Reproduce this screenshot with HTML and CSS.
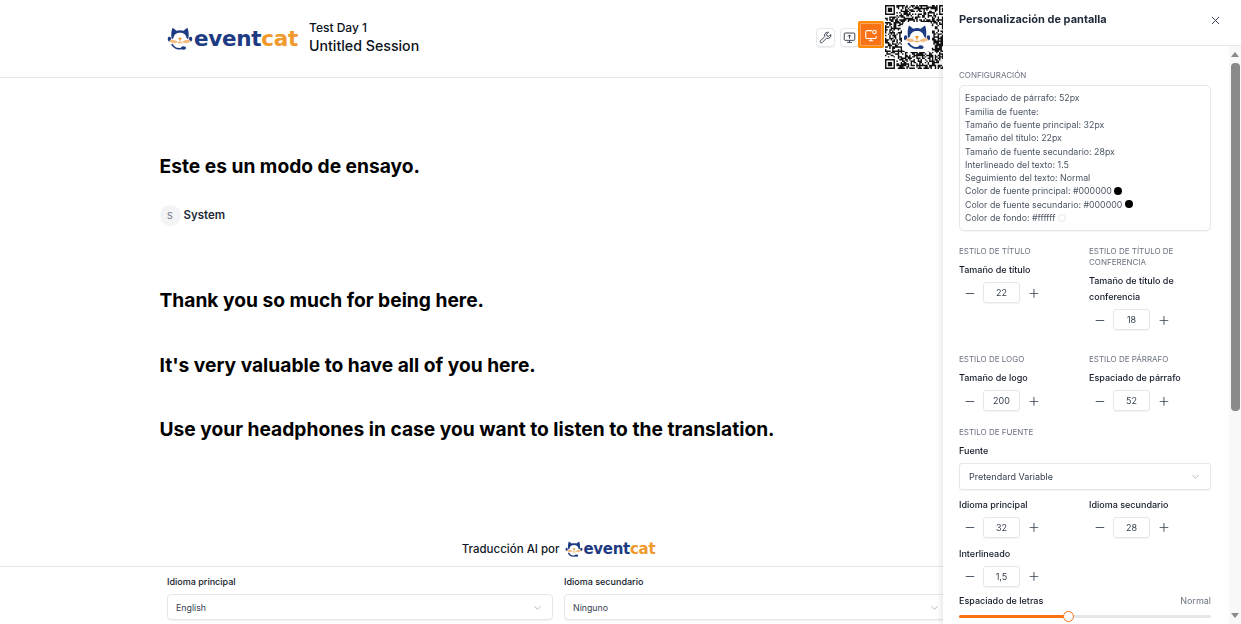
FILE: index.html
```html
<!DOCTYPE html>
<html lang="es">
<head>
<meta charset="utf-8">
<title>Personalización de pantalla</title>
<link rel="stylesheet" href="styles.css">
</head>
<body>
<svg class="defs" width="0" height="0" aria-hidden="true">
  <symbol id="cat" viewBox="0 0 30 28">
    <path d="M5.500 15 C4.500 10 5 4 6.500 1.500 L11 5 C13.500 4.200 16.500 4.200 19 5 L23.500 1.500 C25 4 25.500 10 24.500 15 L22.500 13.500 C22 9.500 19 7.500 15 7.500 C11 7.500 8 9.500 7.500 13.500 Z" fill="#1d3a82"/>
    <rect x="1" y="12" width="3.500" height="5.500" rx="1.700" fill="#1d3a82"/>
    <rect x="25.500" y="12" width="3.500" height="5.500" rx="1.700" fill="#1d3a82"/>
    <path d="M2.500 16.500 C5 14.500 9 15.500 12.500 17.500 C11.500 20 6 20.500 2.500 16.500 Z" fill="#f6bd83"/>
    <path d="M27.500 16.500 C25 14.500 21 15.500 17.500 17.500 C18.500 20 24 20.500 27.500 16.500 Z" fill="#f6bd83"/>
    <path d="M13.500 13.500 L16.500 13.500 L15 15.500 Z M15 15 V18 M12.500 19 L17.500 19" stroke="#ee8f22" stroke-width="1" fill="#ee8f22"/>
    <path d="M5.500 20.500 C8 25 13 26.500 17 25.500" stroke="#1d3a82" stroke-width="2" fill="none"/>
    <ellipse cx="19" cy="25" rx="3" ry="2" fill="#1d3a82"/>
  </symbol>
  <symbol id="chev" viewBox="0 0 10 10">
    <path d="M1.500 3.500 L5 7 L8.500 3.500" fill="none" stroke="#b0b5bd" stroke-width="1"/>
  </symbol>
</svg>

<div class="stage">
  <header class="top">
    <div class="brand">
      <svg class="cat-lg"><use href="#cat"/></svg>
      <span class="word word-lg">event<b>cat</b></span>
    </div>
    <div class="session">
      <div class="day">Test Day 1</div>
      <div class="name">Untitled Session</div>
    </div>
    <div class="tools">
      <span class="tool">
        <svg viewBox="0 0 16 16" width="13" height="13"><path d="M10.500 1.500a3.700 3.700 0 0 0-3.300 5.200L1.800 12.100a1.400 1.400 0 0 0 2.100 2.100l5.400-5.400a3.700 3.700 0 0 0 5.100-4.500l-2.400 2.400-2.100-.6-.6-2.100 2.400-2.400a3.700 3.700 0 0 0-1.200-.1z" fill="none" stroke="#374151" stroke-width="1.200" stroke-linejoin="round"/></svg>
      </span>
      <span class="tool">
        <svg viewBox="0 0 16 16" width="13" height="13"><rect x="1.500" y="2.500" width="13" height="9" rx="1.200" fill="none" stroke="#374151" stroke-width="1.200"/><path d="M5 14h6M8 11.500V14M8 9.500V5M6 6.800 8 4.800l2 2" fill="none" stroke="#374151" stroke-width="1.200"/></svg>
      </span>
      <span class="tool-on">
        <svg viewBox="0 0 16 16" width="14" height="14"><path d="M9 3H3.500A1.500 1.500 0 0 0 2 4.500v6A1.500 1.500 0 0 0 3.500 12h9a1.500 1.500 0 0 0 1.500-1.500V9M5.500 14.500h5M8 12v2.500" fill="none" stroke="#fff" stroke-width="1.200"/><circle cx="12" cy="4.500" r="2" fill="none" stroke="#fff" stroke-width="1.200"/></svg>
      </span>
      <div class="qr">
        <svg id="qr" class="qr-code" viewBox="0 0 45 45"></svg>
        <span class="qr-logo"><svg class="cat-qr"><use href="#cat"/></svg></span>
      </div>
    </div>
  </header>

  <main class="speech">
    <h2 class="line">Este es un modo de ensayo.</h2>
    <div class="speaker"><span class="avatar">S</span><span class="who">System</span></div>
    <p class="line first">Thank you so much for being here.</p>
    <p class="line">It's very valuable to have all of you here.</p>
    <p class="line">Use your headphones in case you want to listen to the translation.</p>
  </main>

  <div class="credit">
    <span>Traducción AI por</span>
    <svg class="cat-sm"><use href="#cat"/></svg>
    <span class="word word-sm">event<b>cat</b></span>
  </div>

  <footer class="langs">
    <div class="lang">
      <div class="lang-label">Idioma principal</div>
      <div class="lang-select"><span>English</span><svg class="chev"><use href="#chev"/></svg></div>
    </div>
    <div class="lang">
      <div class="lang-label">Idioma secundario</div>
      <div class="lang-select"><span>Ninguno</span><svg class="chev"><use href="#chev"/></svg></div>
    </div>
  </footer>
</div>

<aside class="panel">
  <div class="panel-head">
    <h1>Personalización de pantalla</h1>
    <svg viewBox="0 0 10 10" width="9" height="9"><path d="M1 1l8 8M9 1L1 9" stroke="#374151" stroke-width="1.100"/></svg>
  </div>
  <div class="panel-view">
    <div class="panel-body">
      <div class="sec">Configuración</div>
      <div class="summary">
        <div>Espaciado de párrafo: 52px</div>
        <div>Familia de fuente:</div>
        <div>Tamaño de fuente principal: 32px</div>
        <div>Tamaño del título: 22px</div>
        <div>Tamaño de fuente secundario: 28px</div>
        <div>Interlineado del texto: 1.5</div>
        <div>Seguimiento del texto: Normal</div>
        <div>Color de fuente principal: #000000 <i class="dot"></i></div>
        <div>Color de fuente secundario: #000000 <i class="dot"></i></div>
        <div>Color de fondo: #ffffff <i class="dot dot-w"></i></div>
      </div>

      <div class="cols row-a">
        <div>
          <div class="sec">Estilo de título</div>
          <div class="fld sec-gap">Tamaño de título</div>
          <div class="step"><span class="op">−</span><span class="num">22</span><span class="op">+</span></div>
        </div>
        <div>
          <div class="sec">Estilo de título de conferencia</div>
          <div class="fld sec-gap">Tamaño de título de conferencia</div>
          <div class="step"><span class="op">−</span><span class="num">18</span><span class="op">+</span></div>
        </div>
      </div>

      <div class="cols row-b">
        <div>
          <div class="sec">Estilo de logo</div>
          <div class="fld sec-gap">Tamaño de logo</div>
          <div class="step"><span class="op">−</span><span class="num">200</span><span class="op">+</span></div>
        </div>
        <div>
          <div class="sec">Estilo de párrafo</div>
          <div class="fld sec-gap">Espaciado de párrafo</div>
          <div class="step"><span class="op">−</span><span class="num">52</span><span class="op">+</span></div>
        </div>
      </div>

      <div class="sec">Estilo de fuente</div>
      <div class="fld sec-gap">Fuente</div>
      <div class="font-select"><span>Pretendard Variable</span><svg class="chev"><use href="#chev"/></svg></div>

      <div class="cols row-c">
        <div>
          <div class="fld">Idioma principal</div>
          <div class="step"><span class="op">−</span><span class="num">32</span><span class="op">+</span></div>
        </div>
        <div>
          <div class="fld">Idioma secundario</div>
          <div class="step"><span class="op">−</span><span class="num">28</span><span class="op">+</span></div>
        </div>
      </div>

      <div class="fld row-d">Interlineado</div>
      <div class="step"><span class="op">−</span><span class="num">1,5</span><span class="op">+</span></div>

      <div class="track-head"><span class="fld">Espaciado de letras</span><span class="track-val">Normal</span></div>
      <div class="track"><div class="track-fill"><i class="thumb"></i></div></div>
    </div>
    <div class="bar">
      <i class="arrow arrow-up"></i>
      <i class="bar-thumb"></i>
      <i class="arrow arrow-down"></i>
    </div>
  </div>
</aside>
<script src="qr.js"></script>
</body>
</html>
```

FILE: styles.css
```css
* { box-sizing: border-box; }
html, body { margin: 0; height: 100%; overflow: hidden; }
body { font-family: Inter, "Noto Sans", sans-serif; color: #111827; background: #fff; }
.defs { position: absolute; }

.stage { display: flex; flex-direction: column; height: 624px; width: 1117px; }

.top { display: flex; align-items: center; height: 78px; flex: none; border-bottom: 1px solid #e5e7eb; padding-left: 167px; width: 1241px; position: relative; }
.brand { display: flex; align-items: center; width: 142px; }
.cat-lg { width: 26px; height: 25px; flex: none; }
.word { font-family: "DejaVu Sans", sans-serif; font-weight: 700; color: #1d3a82; letter-spacing: -0.3px; }
.word b { color: #f0992c; font-weight: 700; }
.word-lg { font-size: 21.500px; line-height: 30px; margin-left: 1px; }
.word-sm { font-size: 15px; line-height: 20px; }
.session { display: flex; flex-direction: column; padding-bottom: 2px; }
.day { font-size: 12px; line-height: 16px; font-weight: 500; color: #0b1220; }
.name { font-size: 14.200px; line-height: 20px; font-weight: 500; color: #0b1220; }

.tools { position: absolute; left: 816px; top: 5px; display: flex; align-items: center; height: 64px; }
.tool { width: 19px; height: 19px; margin-right: 5px; border: 1px solid #e5e7eb; border-radius: 4px; display: flex; align-items: center; justify-content: center; box-shadow: 0 1px 1px rgba(0,0,0,.06); }
.tool-on { width: 26px; height: 27px; margin: -5px 0 0 -6px; background: #f97316; border: 2px solid #ff8a00; border-radius: 2px; outline: 1px solid rgba(255,255,255,.35); outline-offset: -3px; display: flex; align-items: center; justify-content: center; }
.qr { position: relative; width: 64px; height: 64px; margin-left: 1px; }
.qr-code { display: block; width: 64px; height: 64px; }
.qr-logo { position: absolute; left: 17px; top: 17px; width: 30px; height: 30px; background: #fff; border-radius: 5px; display: flex; align-items: center; justify-content: center; }
.cat-qr { width: 28px; height: 26px; }

.speech { flex: 1; padding: 73px 0 0 159.500px; }
.line { margin: 0 0 34.5px; font-size: 19.200px; line-height: 30px; font-weight: 700; color: #000; white-space: nowrap; }
.speaker { display: flex; align-items: center; height: 21px; margin-top: -11px; }
.avatar { width: 21px; height: 21px; border-radius: 50%; background: #f3f4f6; color: #6b7280; font-size: 9px; display: flex; align-items: center; justify-content: center; }
.who { font-size: 11.500px; font-weight: 600; color: #1f2937; margin-left: 3px; }
.first { margin-top: 59.500px; }

.credit { display: flex; align-items: center; justify-content: center; height: 24px; flex: none; font-size: 11.500px; font-weight: 500; color: #111827; margin-bottom: 5px; }
.cat-sm { width: 18px; height: 18px; margin: 0 1px 0 5px; }

.langs { display: grid; grid-template-columns: 386px 386px; column-gap: 11px; padding: 0 0 3px 167px; border-top: 1px solid #e5e7eb; height: 58px; flex: none; width: 1241px; }
.lang-label { font-size: 9px; line-height: 12px; font-weight: 500; color: #111827; margin: 9px 0 6px; }
.lang-select { height: 26px; border: 1px solid #e5e7eb; border-radius: 4px; padding: 0 10px 0 8px; display: flex; align-items: center; justify-content: space-between; font-size: 8.800px; color: #374151; box-shadow: 0 1px 1px rgba(0,0,0,.05); }
.chev { width: 9px; height: 9px; }

.panel { position: fixed; top: 0; right: 0; width: 298px; height: 624px; background: #fff; box-shadow: -2px 0 6px rgba(0,0,0,.1); display: flex; flex-direction: column; }
.panel-head { height: 46px; flex: none; border-bottom: 1px solid #e5e7eb; display: flex; justify-content: space-between; align-items: flex-start; padding: 12px 21px 0 16px; }
.panel-head h1 { margin: 0; font-size: 11px; line-height: 14px; font-weight: 700; color: #1f2937; }
.panel-head svg { margin-top: 4px; }
.panel-view { flex: 1; min-height: 0; display: flex; overflow: hidden; }
.panel-body { width: 286px; flex: none; padding: 24px 18px 0 16px; }
.bar { width: 12px; flex: none; background: #f8f8f8; display: flex; flex-direction: column; align-items: center; padding-top: 6px; }
.arrow { width: 0; height: 0; border-left: 4px solid transparent; border-right: 4px solid transparent; }
.arrow-up { border-bottom: 5px solid #8a8a8a; }
.arrow-down { border-top: 5px solid #8a8a8a; margin-top: 202px; }
.bar-thumb { width: 9px; height: 348px; background: #8a8a8a; border-radius: 4px; margin-top: 6px; }

.sec { font-size: 8px; line-height: 11px; text-transform: uppercase; color: #6b7280; }
.summary { margin: 4px 0 15px; height: 146px; border: 1px solid #e5e7eb; border-radius: 5px; padding: 5.200px 5px; font-size: 8.800px; line-height: 13.330px; color: #4b5563; box-shadow: 0 1px 1px rgba(0,0,0,.04); }
.dot { display: inline-block; width: 8px; height: 8px; border-radius: 50%; background: #000; vertical-align: -0.5px; }
.dot-w { background: #fff; border: 1px solid #e5e7eb; }

.cols { display: grid; grid-template-columns: 120px 122px; column-gap: 10px; }
.row-a { margin-bottom: 24px; }
.row-b { margin-bottom: 15.500px; }
.row-c { margin-top: 7px; }
.row-d { margin-top: 8px; }
.fld { font-size: 9px; line-height: 16px; font-weight: 500; color: #111827; }
.sec-gap { margin-top: 5px; }
.step { display: flex; align-items: center; margin-top: 4px; height: 21px; }
.op { width: 22px; margin: 0 2px 2px 0; text-align: center; font-size: 20px; font-weight: 200; color: #374151; line-height: 20px; }
.op:last-child { margin: 0 0 2px 3px; }
.num { width: 37px; height: 21px; border: 1px solid #e5e7eb; border-radius: 3px; font-size: 9px; line-height: 19px; text-align: center; color: #374151; box-shadow: 0 1px 1px rgba(0,0,0,.05); }
.font-select { height: 27px; margin-top: 4px; border: 1px solid #e5e7eb; border-radius: 3px; padding: 0 10px 0 9px; display: flex; align-items: center; justify-content: space-between; font-size: 9px; color: #374151; box-shadow: 0 1px 1px rgba(0,0,0,.05); }
.track-head { display: flex; justify-content: space-between; margin-top: 6px; }
.track-val { font-size: 9px; line-height: 16px; color: #6b7280; }
.track { height: 3px; margin-top: 6px; background: #e5e7eb; border-radius: 2px; }
.track-fill { position: relative; height: 3px; width: 110px; background: #f97316; border-radius: 2px; }
.thumb { position: absolute; right: -5px; top: -4px; width: 11px; height: 11px; border-radius: 50%; background: #fff; border: 1.500px solid #f97316; }
```

FILE: qr.js
```js
(function () {
  var n = 45, seed = 20240517, d = "";
  function rnd() { seed = (seed * 1664525 + 1013904223) >>> 0; return (seed >>> 16) / 65536; }
  function finder(x, y) {
    return function (c, r) {
      var i = c - x, j = r - y;
      if (i < -1 || j < -1 || i > 7 || j > 7) return null;
      if (i < 0 || j < 0 || i > 6 || j > 6) return 0;
      if (i === 0 || j === 0 || i === 6 || j === 6) return 1;
      if (i === 1 || j === 1 || i === 5 || j === 5) return 0;
      return 1;
    };
  }
  var fs = [finder(0, 0), finder(n - 7, 0), finder(0, n - 7)];
  for (var r = 0; r < n; r++) {
    for (var c = 0; c < n; c++) {
      var v = null;
      for (var k = 0; k < 3; k++) { var t = fs[k](c, r); if (t !== null) v = t; }
      if (v === null) v = rnd() < 0.55 ? 1 : 0;
      if (v) d += "M" + c + " " + r + "h1v1h-1z";
    }
  }
  var p = document.createElementNS("http://www.w3.org/2000/svg", "path");
  p.setAttribute("d", d);
  p.setAttribute("fill", "#111");
  document.getElementById("qr").appendChild(p);
})();
```
